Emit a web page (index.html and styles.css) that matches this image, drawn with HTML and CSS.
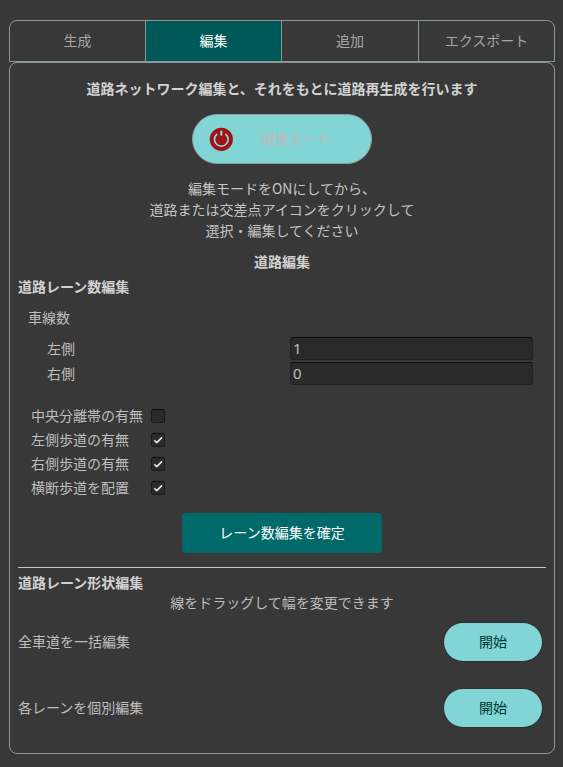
FILE: index.html
```html
<!DOCTYPE html>
<html lang="ja">
<head>
<meta charset="utf-8">
<title>道路編集</title>
<link rel="stylesheet" href="styles.css">
</head>
<body>
<nav class="tabs">
  <div class="tab">生成</div>
  <div class="tab active">編集</div>
  <div class="tab">追加</div>
  <div class="tab">エクスポート</div>
</nav>
<main class="panel">
  <h1 class="lead">道路ネットワーク編集と、それをもとに道路再生成を行います</h1>
  <button class="mode">
    <svg class="power" width="24" height="24" viewBox="0 0 24 24">
      <circle cx="12.3" cy="12.3" r="11.6" fill="#a01216"/>
      <path d="M8.2 7A6.8 6.8 0 1 0 16.4 7" fill="none" stroke="#82d5d5" stroke-width="1.7"/>
      <path d="M12.3 3.8V8.6" stroke="#82d5d5" stroke-width="2.2"/>
    </svg>
    <span class="mode-label">編集モード</span>
  </button>
  <p class="guide">編集モードをONにしてから、<br>道路または交差点アイコンをクリックして<br>選択・編集してください</p>
  <h2 class="title">道路編集</h2>
  <h3 class="section">道路レーン数編集</h3>
  <div class="group">車線数</div>
  <div class="field"><span class="field-label">左側</span><input class="input" value="1"></div>
  <div class="field"><span class="field-label">右側</span><input class="input" value="0"></div>
  <div class="checks">
    <div class="check"><span class="check-label">中央分離帯の有無</span><span class="box"></span></div>
    <div class="check"><span class="check-label">左側歩道の有無</span><span class="box"><svg width="12" height="12" viewBox="0 0 12 12"><path class="tick" d="M2.3 6.2 4.8 8.6 10 3.4"/></svg></span></div>
    <div class="check"><span class="check-label">右側歩道の有無</span><span class="box"><svg width="12" height="12" viewBox="0 0 12 12"><path class="tick" d="M2.3 6.2 4.8 8.6 10 3.4"/></svg></span></div>
    <div class="check"><span class="check-label">横断歩道を配置</span><span class="box"><svg width="12" height="12" viewBox="0 0 12 12"><path class="tick" d="M2.3 6.2 4.8 8.6 10 3.4"/></svg></span></div>
  </div>
  <button class="confirm">レーン数編集を確定</button>
  <hr class="rule">
  <h3 class="section shape">道路レーン形状編集</h3>
  <p class="hint">線をドラッグして幅を変更できます</p>
  <div class="action"><span>全車道を一括編集</span><button class="start">開始</button></div>
  <div class="action"><span>各レーンを個別編集</span><button class="start">開始</button></div>
</main>
</body>
</html>
```
FILE: styles.css
```css
* { box-sizing: border-box; }
body {
  margin: 0;
  padding: 20px 8px 13px 9px;
  height: 767px;
  overflow: hidden;
  background: #383838;
  color: #bebebe;
  font: 14px/20px "Noto Sans CJK JP", sans-serif;
}
h1, h2, h3, p { margin: 0; font-size: 14px; }
h1, h2, h3 { font-weight: 700; color: #d2d2d2; }
button { font: inherit; padding: 0 0 2px; }
.tabs {
  display: grid;
  grid-template-columns: 136px 136px 137px 1fr;
  height: 42px;
  border: 1px solid #879896;
  border-radius: 8px 8px 0 0;
  overflow: hidden;
}
.tab {
  display: flex;
  align-items: center;
  justify-content: center;
  padding-bottom: 2px;
  border-right: 1px solid #879896;
  color: #a6a6a6;
}
.tab:last-child { border-right: 0; }
.tab.active { background: #005858; color: #fff; }
.panel {
  height: 692px;
  border: 1px solid #879896;
  border-radius: 8px;
  padding: 15px 8px 0;
}
.lead { text-align: center; white-space: nowrap; }
.mode {
  display: flex;
  align-items: center;
  width: 180px;
  height: 50px;
  margin: 16px auto 0 174px;
  padding: 0 0 0 16px;
  border: 1px solid #8b9d9c;
  border-radius: 25px;
  background: #82d5d5;
}
.mode-label { margin: 0 0 2px 28px; color: #bebaba; }
.guide { margin: 14px 0 0; text-align: center; line-height: 21px; color: #c4c4c4; }
.title { margin-top: 10px; text-align: center; }
.section { margin-top: 5px; }
.group { margin: 11px 0 9px 10px; }
.field {
  display: flex;
  align-items: center;
  justify-content: space-between;
  height: 25px;
  padding: 0 13px 0 29px;
}
.field-label { margin-bottom: 2px; }
.input {
  width: 243px;
  height: 23px;
  padding: 0 2px 2px;
  border: 1px solid #212121;
  border-top-color: #0d0d0d;
  border-radius: 3px;
  background: #2a2a2a;
  color: #bebebe;
  font: 15px "Noto Sans", sans-serif;
}
.checks { margin: 18px 0 0 13px; }
.check { display: flex; align-items: center; height: 24px; }
.check-label { width: 120px; margin-bottom: 2px; }
.box {
  width: 14px;
  height: 14px;
  border: 1px solid #1b1b1b;
  border-top-color: #0d0d0d;
  border-radius: 2px;
  background: #2a2a2a;
}
.box svg { display: block; }
.tick { fill: none; stroke: #eee; stroke-width: 1.5; }
.confirm {
  display: block;
  width: 200px;
  height: 40px;
  margin: 13px 0 0 164px;
  border: 0;
  border-radius: 4px;
  background: #006a6a;
  color: #fff;
}
.rule { height: 1px; margin: 14px 0 0; border: 0; background: #bfc9c8; }
.shape { margin-top: 4px; }
.hint { text-align: center; }
.action {
  display: flex;
  align-items: center;
  justify-content: space-between;
  height: 38px;
  margin-top: 28px;
  padding-right: 4px;
}
.action span { margin-bottom: 2px; }
.hint + .action { margin-top: 11px; }
.start {
  width: 98px;
  height: 38px;
  border: 0;
  border-radius: 19px;
  background: #82d5d5;
  color: #003737;
  box-shadow: 0 0 0 1px #303030;
}
```
